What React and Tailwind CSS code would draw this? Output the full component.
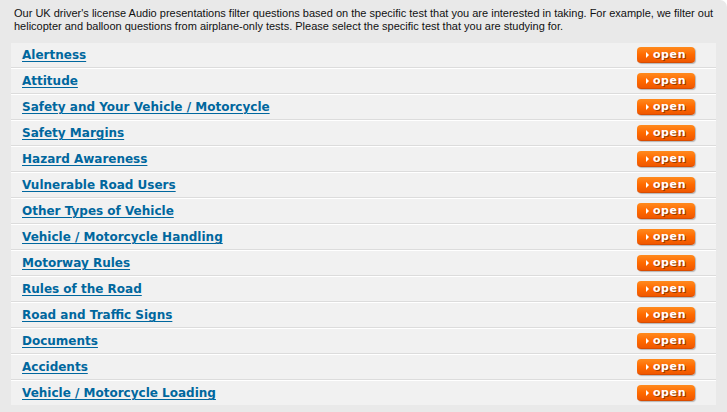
const TESTS = [
  'Alertness',
  'Attitude',
  'Safety and Your Vehicle / Motorcycle',
  'Safety Margins',
  'Hazard Awareness',
  'Vulnerable Road Users',
  'Other Types of Vehicle',
  'Vehicle / Motorcycle Handling',
  'Motorway Rules',
  'Rules of the Road',
  'Road and Traffic Signs',
  'Documents',
  'Accidents',
  'Vehicle / Motorcycle Loading',
]

function OpenButton() {
  return (
    <button className="flex items-center justify-center gap-[4px] w-[58px] h-[16px] rounded-[4px] bg-gradient-to-b from-[#ff8a1c] via-[#ff6a00] to-[#f05800] border-b border-b-[#d94c00] shadow-[1px_1px_1px_rgba(0,0,0,0.25)] text-white text-[11px] font-bold leading-none [text-shadow:1px_1px_0_#9a3a00]">
      <span className="w-0 h-0 border-y-[3px] border-y-transparent border-l-[3px] border-l-white"></span>
      <span className="tracking-[0.6px]">open</span>
    </button>
  )
}

export default function App() {
  return (
    <div className="w-[727px] h-[412px] bg-white font-['DejaVu_Sans',Verdana,sans-serif]">
      <div className="h-full bg-[#e9e9e9] rounded-tr-[7px] pt-[7px] pl-[11px] pr-[11px]">
        <p className="font-['Liberation_Sans',Arial,sans-serif] text-[11px] leading-[13px] text-[#111] pl-[3px] -mr-[8px] mb-[10px]">
          Our UK driver's license Audio presentations filter questions based on the specific test that you are interested in taking. For example, we filter out helicopter and balloon questions from airplane-only tests. Please select the specific test that you are studying for.
        </p>
        <div className="bg-[#f1f1f1]">
          {TESTS.map((t, i) => (
            <div key={t} className={i < TESTS.length - 1 ? 'border-b border-b-[#dcdcdc] shadow-[0_1px_0_#ffffff] mb-[1px]' : ''}>
              <div className="h-[24px] flex items-center justify-between pl-[11px] pr-[21px]">
                <a href="#" className="text-[12px] font-bold text-[#00679e] underline underline-offset-[2px] decoration-[1px]">{t}</a>
                <OpenButton />
              </div>
            </div>
          ))}
        </div>
      </div>
    </div>
  )
}
